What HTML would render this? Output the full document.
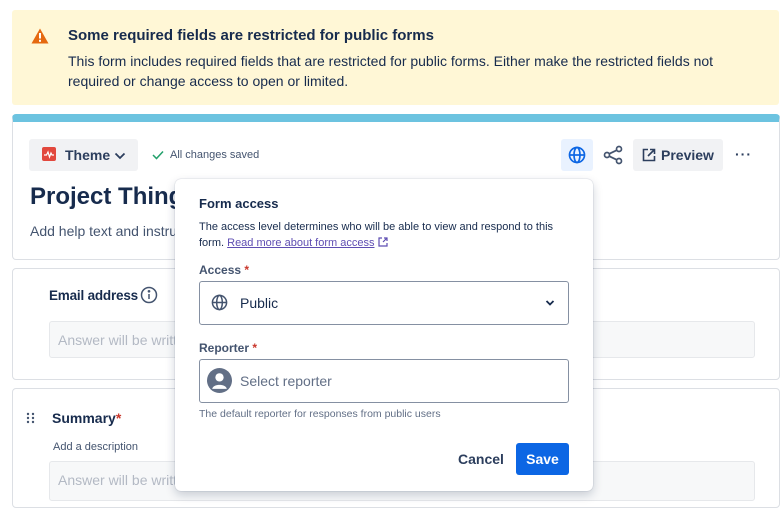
<!DOCTYPE html>
<html><head><meta charset="utf-8"><style>
*{box-sizing:border-box;margin:0;padding:0}
body{width:782px;height:492px;overflow:hidden;background:#fff;font-family:"Liberation Sans",sans-serif;color:#172b4d;position:relative}
.abs{position:absolute}
.card{position:absolute;left:12px;width:768px;border:1px solid #dcdfe4;border-radius:4px;background:#fff}
</style></head><body>
<div class="abs" style="left:12px;top:10px;width:767px;height:95px;background:#fff7d6;border-radius:3px"></div>
<svg class="abs" style="left:31px;top:28px" width="18" height="16" viewBox="0 0 18 16"><path d="M9 0.5L17.5 15.5H0.5Z" fill="#e56910"/><rect x="8" y="5" width="2" height="5.5" fill="#fff"/><rect x="8" y="11.8" width="2" height="2" fill="#fff"/></svg>
<div class="abs" style="left:68px;top:27px;font-size:15px;font-weight:bold">Some required fields are restricted for public forms</div>
<div class="abs" style="left:68px;top:51px;font-size:14px;line-height:20px;color:#172b4d;width:700px">This form includes required fields that are restricted for public forms. Either make the restricted fields not required or change access to open or limited.</div>

<div class="card" style="top:114px;height:146px;border-top:8px solid #6cc3e0"></div>
<div class="abs" style="left:29px;top:139px;width:109px;height:32px;background:#f1f2f4;border-radius:3px"></div>
<div class="abs" style="left:42px;top:147px;width:14px;height:14px;background:#e2483d;border-radius:2px"></div>
<svg class="abs" style="left:42px;top:147px" width="14" height="14"><path d="M2 8H4.5L6 5L7.5 10L9 6L10 8H12" stroke="#fff" fill="none" stroke-width="1.2"/></svg>
<div class="abs" style="left:65px;top:147px;font-size:14px;font-weight:bold;color:#2c3e5d">Theme</div>
<svg class="abs" style="left:114px;top:152px" width="12" height="8"><path d="M1.5 1.5L6 6L10.5 1.5" stroke="#2c3e5d" stroke-width="1.8" fill="none"/></svg>
<svg class="abs" style="left:152px;top:150px" width="12" height="10"><path d="M1 5L4.5 8.5L11 1.5" stroke="#22a06b" stroke-width="1.5" fill="none"/></svg>
<div class="abs" style="left:170px;top:149px;font-size:11px;color:#44546f">All changes saved</div>
<div class="abs" style="left:561px;top:139px;width:32px;height:32px;background:#e9f2ff;border-radius:3px"></div>
<svg class="abs" style="left:568px;top:146px" width="18" height="18" viewBox="0 0 18 18" fill="none" stroke="#0c66e4" stroke-width="1.7"><circle cx="9" cy="9" r="7.5"/><ellipse cx="9" cy="9" rx="3" ry="7.5"/><path d="M1.5 9H16.5"/></svg>
<svg class="abs" style="left:603px;top:145px" width="20" height="20" viewBox="0 0 20 20" fill="none" stroke="#44546f" stroke-width="1.7"><circle cx="4" cy="10" r="2.5"/><circle cx="16" cy="4" r="2.5"/><circle cx="16" cy="16" r="2.5"/><path d="M6.2 8.8L13.8 5.2M6.2 11.2L13.8 14.8"/></svg>
<div class="abs" style="left:633px;top:139px;width:90px;height:32px;background:#f1f2f4;border-radius:3px"></div>
<svg class="abs" style="left:642px;top:148px" width="14" height="14" fill="none" stroke="#2c3e5d" stroke-width="1.6"><path d="M6 1.5H1.5V12.5H12.5V8M8 1.5H12.5V6M12.5 1.5L6 8"/></svg>
<div class="abs" style="left:661px;top:147px;font-size:14px;font-weight:bold;color:#2c3e5d">Preview</div>
<div class="abs" style="left:735px;top:146px;font-size:14px;font-weight:bold;color:#2c3e5d;letter-spacing:1px">···</div>
<div class="abs" style="left:30px;top:183px;font-size:24px;font-weight:bold;color:#172b4d">Project Things</div>
<div class="abs" style="left:30px;top:223px;font-size:14px;color:#44546f">Add help text and instructions</div>

<div class="card" style="top:268px;height:112px"></div>
<div class="abs" style="left:49px;top:288px;font-size:13.5px;font-weight:bold;color:#172b4d;letter-spacing:-0.2px">Email address</div>
<svg class="abs" style="left:140px;top:286px" width="18" height="18" fill="none" stroke="#44546f" stroke-width="1.5"><circle cx="9" cy="9" r="7.5"/><path d="M9 8V13"/><circle cx="9" cy="5.3" r=".6" fill="#44546f"/></svg>
<div class="abs" style="left:49px;top:321px;width:706px;height:37px;background:#f7f8f9;border:1px solid #e6e8eb;border-radius:3px"></div>
<div class="abs" style="left:58px;top:332px;font-size:14px;color:#b3b9c4">Answer will be written here</div>

<div class="card" style="top:388px;height:120px"></div>
<svg class="abs" style="left:26px;top:412px" width="10" height="12" fill="#44546f"><circle cx="2" cy="2" r="1.2"/><circle cx="7" cy="2" r="1.2"/><circle cx="2" cy="6" r="1.2"/><circle cx="7" cy="6" r="1.2"/><circle cx="2" cy="10" r="1.2"/><circle cx="7" cy="10" r="1.2"/></svg>
<div class="abs" style="left:52px;top:410px;font-size:14px;font-weight:bold">Summary<span style="color:#c9372c">*</span></div>
<div class="abs" style="left:53px;top:441px;font-size:11px;color:#44546f">Add a description</div>
<div class="abs" style="left:49px;top:461px;width:706px;height:40px;background:#f7f8f9;border:1px solid #e6e8eb;border-radius:3px"></div>
<div class="abs" style="left:58px;top:472px;font-size:14px;color:#b3b9c4">Answer will be written here</div>

<div class="abs" style="left:175px;top:179px;width:418px;height:312px;background:#fff;border-radius:6px;box-shadow:0 4px 10px rgba(9,30,66,.2),0 0 1px rgba(9,30,66,.35)"></div>
<div class="abs" style="left:199px;top:196px;font-size:13px;font-weight:bold;color:#172b4d">Form access</div>
<div class="abs" style="left:199px;top:219px;font-size:11px;line-height:16px;color:#172b4d;width:380px;white-space:nowrap">The access level determines who will be able to view and respond to this<br>form. <span style="color:#5e4db2;text-decoration:underline">Read more about form access</span> <svg width="10" height="10" fill="none" stroke="#5e4db2" stroke-width="1.2" style="vertical-align:-1px"><path d="M4 1H1V9H9V6M6 1H9V4M9 1L5 5"/></svg></div>
<div class="abs" style="left:199px;top:263px;font-size:12px;font-weight:bold;color:#44546f">Access<span style="color:#c9372c"> *</span></div>
<div class="abs" style="left:199px;top:281px;width:370px;height:44px;border:1px solid #8590a2;border-radius:3px"></div>
<svg class="abs" style="left:211px;top:294px" width="17" height="17" viewBox="0 0 18 18" fill="none" stroke="#44546f" stroke-width="1.6"><circle cx="9" cy="9" r="7.5"/><ellipse cx="9" cy="9" rx="3" ry="7.5"/><path d="M1.5 9H16.5"/></svg>
<div class="abs" style="left:240px;top:295px;font-size:14px;color:#172b4d">Public</div>
<svg class="abs" style="left:545px;top:299px" width="10" height="8"><path d="M1.5 2L5 5.5L8.5 2" stroke="#172b4d" stroke-width="1.8" fill="none"/></svg>
<div class="abs" style="left:199px;top:341px;font-size:12px;font-weight:bold;color:#44546f">Reporter<span style="color:#c9372c"> *</span></div>
<div class="abs" style="left:199px;top:359px;width:370px;height:44px;border:1px solid #8590a2;border-radius:3px"></div>
<svg class="abs" style="left:207px;top:368px" width="25" height="25" viewBox="0 0 24 24"><circle cx="12" cy="12" r="12" fill="#626f86"/><circle cx="12" cy="9" r="4" fill="#fff"/><path d="M5 20C6 15 18 15 19 20Z" fill="#fff"/></svg>
<div class="abs" style="left:240px;top:373px;font-size:14px;color:#626f86">Select reporter</div>
<div class="abs" style="left:199px;top:408px;font-size:10.5px;color:#626f86">The default reporter for responses from public users</div>
<div class="abs" style="left:458px;top:451px;font-size:14px;font-weight:bold;color:#2c3e5d">Cancel</div>
<div class="abs" style="left:516px;top:443px;width:53px;height:32px;background:#0c66e4;border-radius:3px;color:#fff;font-size:14px;font-weight:bold;text-align:center;line-height:32px">Save</div>
</body></html>
